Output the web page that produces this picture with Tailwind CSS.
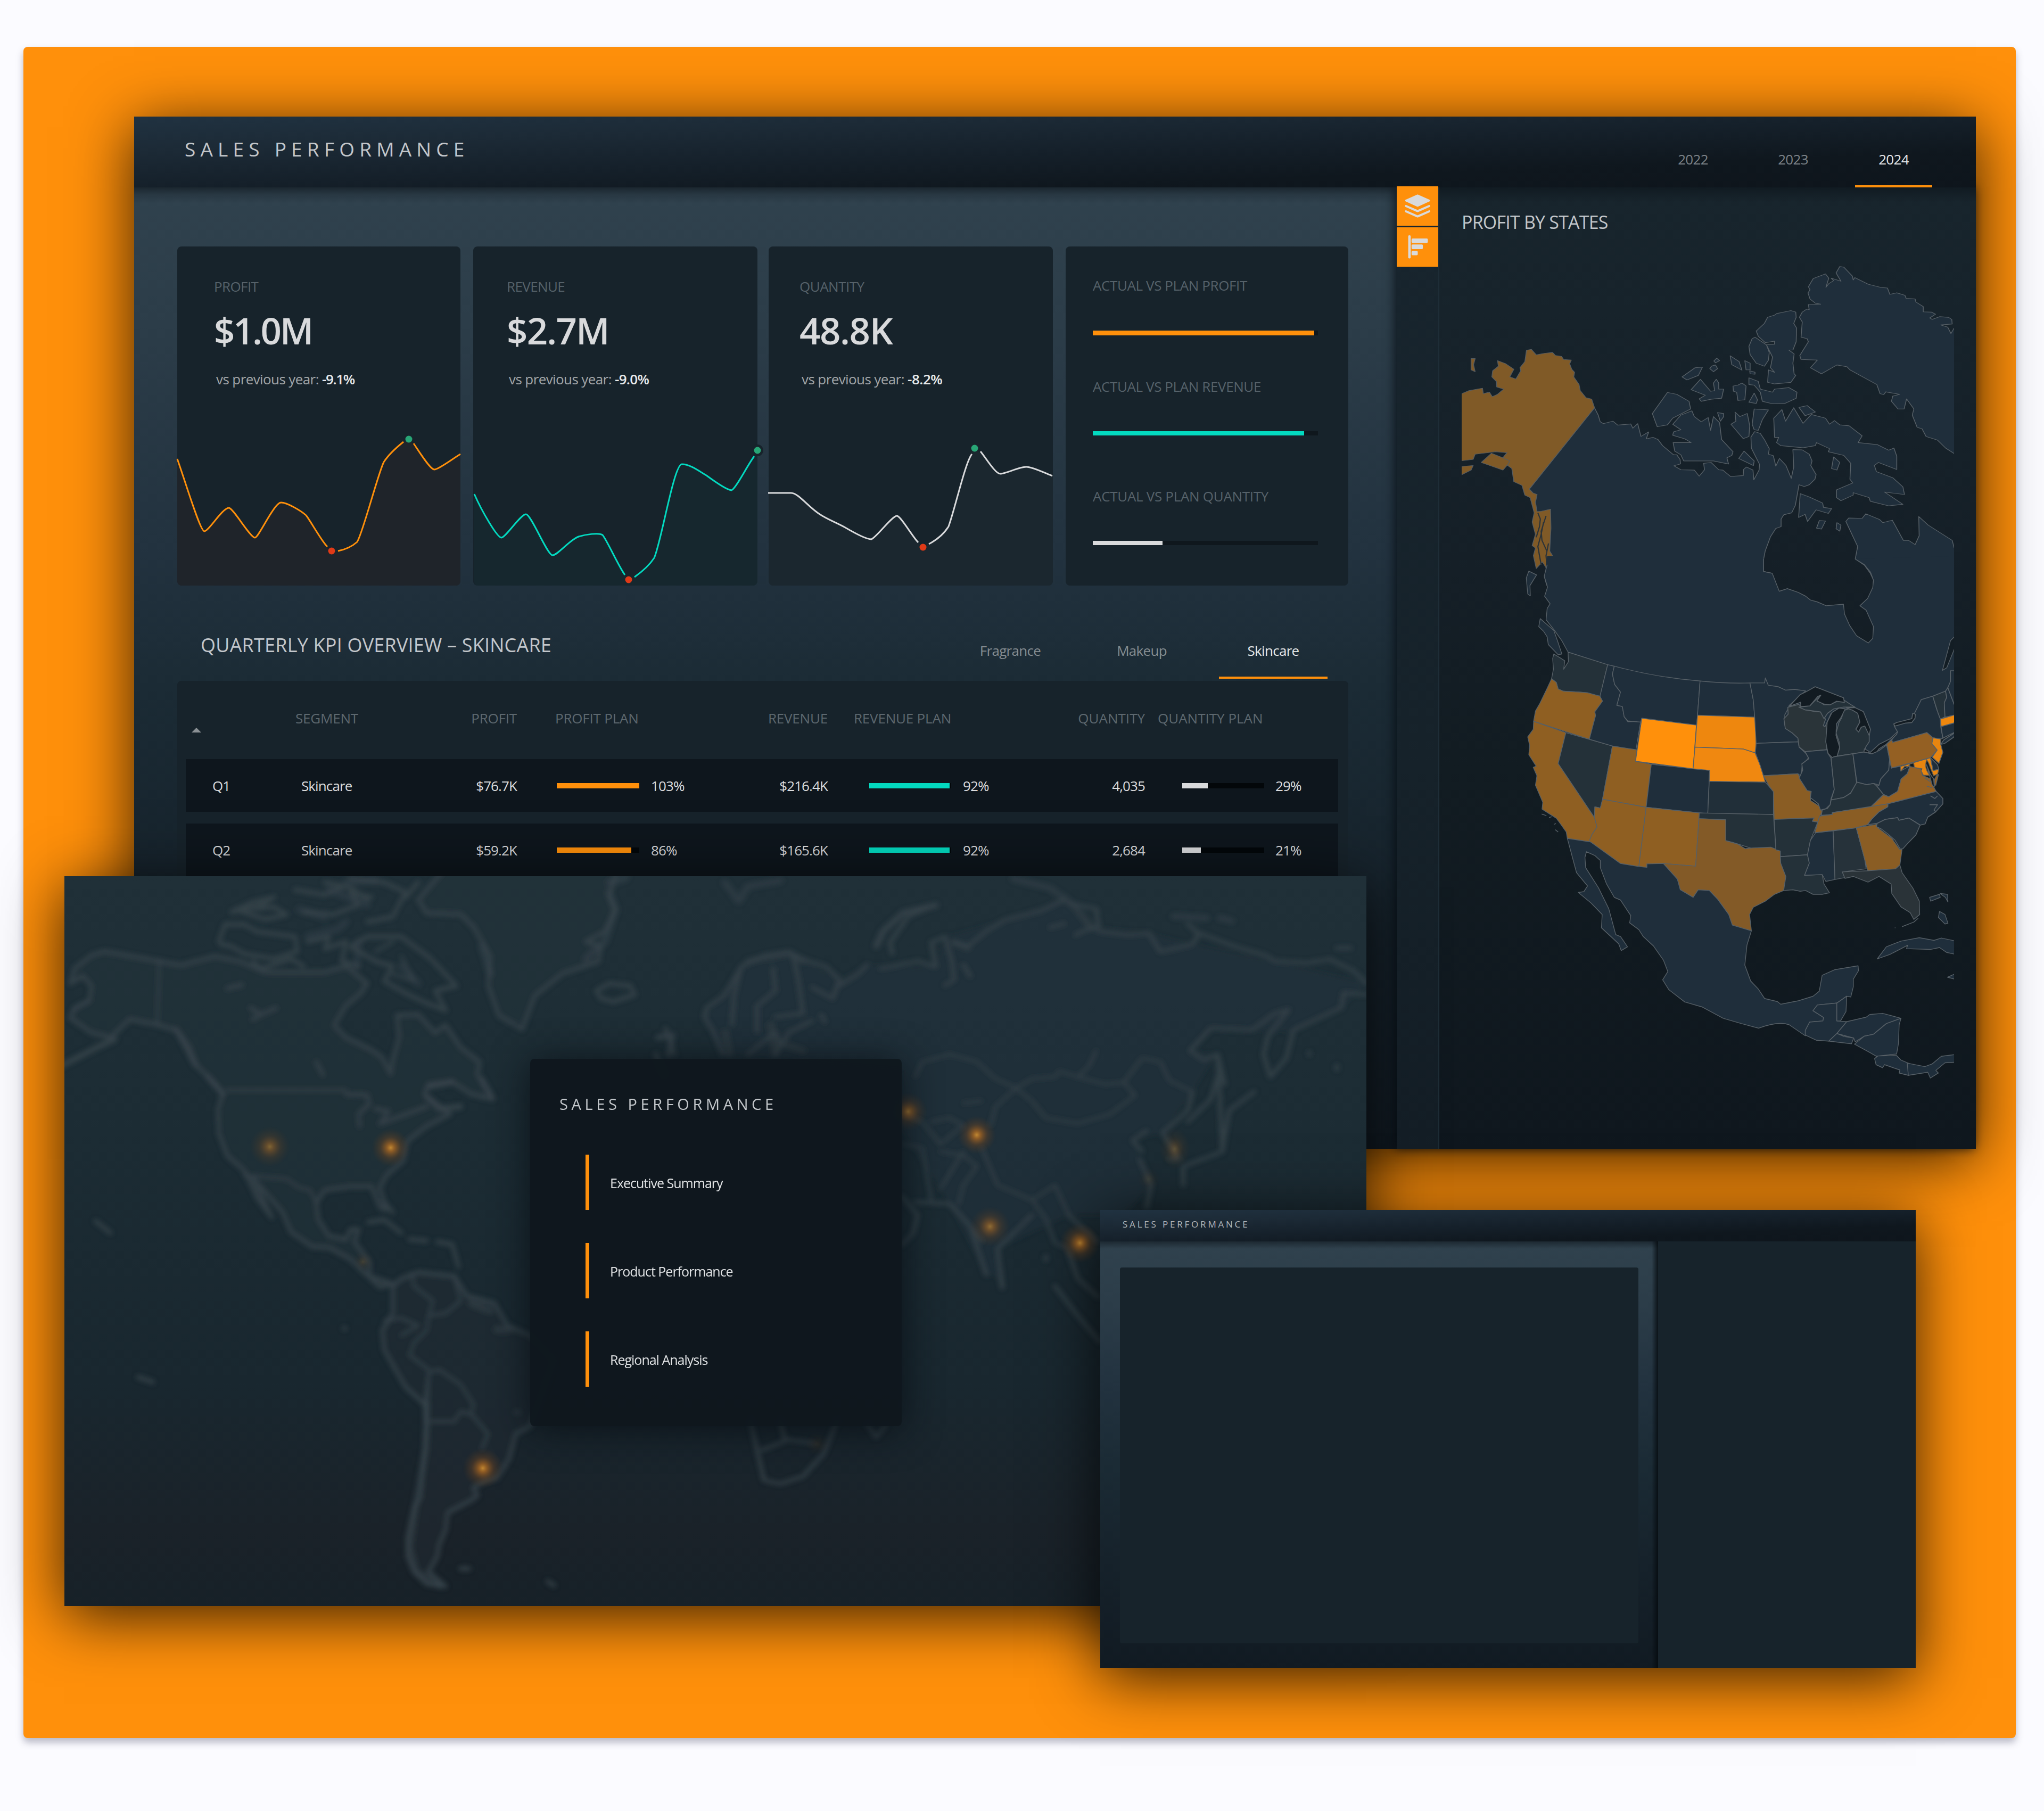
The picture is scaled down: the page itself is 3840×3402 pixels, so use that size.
<!DOCTYPE html>
<html lang="en">

<head>
    <meta charset="UTF-8">
    <meta name="viewport" content="width=device-width, initial-scale=1.0">
    <title>Sales Performance</title>
    <script src="https://cdn.jsdelivr.net/npm/@tailwindcss/browser@4"></script>
</head>

<body class="w-[3840px] h-[3402px] overflow-hidden bg-[#fbfbff] pt-[88px] pl-[44px] font-['Open_Sans','Noto_Sans',sans-serif] text-[26px] leading-none text-[#dcdddf]">

    <div class="relative w-[3743px] h-[3177px] rounded-lg bg-[#ff900b] shadow-[0_8px_14px_rgba(60,60,90,0.35)]">

        <!-- main dashboard -->
        <div class="absolute left-[208px] top-[131px] w-[3460px] h-[1939px] flex flex-col bg-[#17232b] shadow-[0_20px_110px_rgba(0,0,0,0.78)]">
            <header class="relative z-10 h-[133px] shrink-0 flex justify-between bg-[linear-gradient(177.8deg,#203241_0%,#1c2a36_25%,#15202a_50%,#0f171e_75%,#0e151c_100%)]">
                <h1 class="pl-[95px] pt-[41px] text-[37px] leading-[40px] tracking-[9.2px] text-[#c3c7cb]">SALES PERFORMANCE</h1>
                <nav class="flex gap-[43px] pr-[82px] text-[#7d8388] tracking-[-0.7px]">
                    <a class="w-[145px] h-[133px] pt-[67px] pr-[2px] text-center">2022</a>
                    <a class="w-[145px] h-[133px] pt-[67px] pr-[2px] text-center">2023</a>
                    <a class="w-[145px] h-[133px] pt-[67px] text-center text-[#e6e8ea] border-b-4 border-[#ff900b]">2024</a>
                </nav>
            </header>

            <div class="flex flex-1 min-h-0">
                <main class="w-[2372px] pl-[81px] pt-[111px] bg-[linear-gradient(180deg,rgba(10,16,22,0.55)_0,rgba(10,16,22,0.2)_14px,rgba(10,16,22,0)_30px),linear-gradient(180deg,#30424e_0%,#2c3d49_14%,#22323f_38%,#1b2b35_52%,#16222b_75%,#111a22_100%)]">
                    <div class="flex">
                        <section class="relative w-[532px] h-[637px] mr-[24px] rounded-lg bg-[#17232b]">
                            <svg class="absolute inset-0 w-full h-full overflow-visible" viewBox="333 463 532 637" fill="none">
                                <path fill="#ff5c20" fill-opacity=".035" d="M333 862C350 910 376 998 384 998C392 998 418 954 430 954C438 954 470 1010 479 1010C486 1010 515 944 528 944C540 944 566 960 575 968C585 978 608 1022 623 1035C650 1032 662 1026 671 1018C682 1000 710 890 721 868C730 854 748 834 768 825C786 846 808 882 816 882C824 882 850 862 865 853V1092Q865 1100 857 1100H341Q333 1100 333 1092Z" />
                                <path stroke="#ff900b" stroke-width="3" d="M333 862C350 910 376 998 384 998C392 998 418 954 430 954C438 954 470 1010 479 1010C486 1010 515 944 528 944C540 944 566 960 575 968C583 978 605 1018 615 1027M635 1035C650 1032 662 1026 671 1018C682 1000 710 890 721 868C730 854 748 838 758 830M777 833C786 846 808 882 816 882C824 882 850 862 865 853" />
                                <circle cx="623" cy="1035" r="6.5" fill="#e03a17" />
                                <circle cx="768" cy="825" r="6.5" fill="#28a676" />
                            </svg>
                            <div class="relative pl-[69px] pt-[62px]">
                                <h2 class="leading-[26px] tracking-[-0.6px] text-[#56626a]">PROFIT</h2>
                                <p class="mt-[32px] text-[69px] leading-[74px] font-semibold tracking-[-3.4px] text-[#d9dadc]">$1.0M</p>
                                <p class="mt-[39px] pl-1 leading-[32px] tracking-[-0.6px] text-[#a2a6a9]">vs previous year: <span class="font-semibold tracking-[-1.4px] text-[#e8eaeb]">-9.1%</span></p>
                            </div>
                        </section>
                        <section class="relative w-[534px] h-[637px] mr-[21px] rounded-lg bg-[#17232b]">
                            <svg class="absolute inset-0 w-full h-full overflow-visible" viewBox="889 463 534 637" fill="none">
                                <path fill="#03dac0" fill-opacity=".025" d="M891 928C905 960 934 1010 942 1010C950 1010 978 966 988 966C998 966 1028 1043 1038 1043C1048 1043 1070 1014 1087 1008C1100 1004 1128 1002 1132 1003C1140 1010 1166 1070 1181 1089C1200 1076 1218 1064 1229 1048C1242 1020 1264 884 1281 872C1296 872 1312 884 1327 893C1342 904 1364 920 1374 921C1384 921 1408 868 1423 846V1092Q1423 1100 1415 1100H897Q891 1100 891 1092Z" />
                                <path stroke="#03dac0" stroke-width="3" d="M891 928C905 960 934 1010 942 1010C950 1010 978 966 988 966C998 966 1028 1043 1038 1043C1048 1043 1070 1014 1087 1008C1100 1004 1126 1000 1132 1005C1140 1014 1162 1064 1174 1080M1192 1084C1206 1074 1220 1062 1229 1048C1242 1020 1266 872 1281 872C1296 872 1312 884 1327 893C1342 904 1364 920 1374 921C1382 919 1404 874 1417 857" />
                                <circle cx="1181" cy="1089" r="6.5" fill="#e03a17" />
                                <circle cx="1423" cy="846" r="11" fill="#17232b" />
                                <circle cx="1423" cy="846" r="6.5" fill="#28a676" />
                            </svg>
                            <div class="relative pl-[63px] pt-[62px]">
                                <h2 class="leading-[26px] tracking-[-0.6px] text-[#56626a]">REVENUE</h2>
                                <p class="mt-[32px] text-[69px] leading-[74px] font-semibold tracking-[-1.8px] text-[#d9dadc]">$2.7M</p>
                                <p class="mt-[39px] pl-1 leading-[32px] tracking-[-0.6px] text-[#a2a6a9]">vs previous year: <span class="font-semibold tracking-[-0.7px] text-[#e8eaeb]">-9.0%</span></p>
                            </div>
                        </section>
                        <section class="relative w-[534px] h-[637px] mr-[24px] rounded-lg bg-[#17232b]">
                            <svg class="absolute inset-0 w-full h-full overflow-visible" viewBox="1444 463 534 637" fill="none">
                                <path fill="#ffffff" fill-opacity=".02" d="M1444 926H1486C1500 928 1518 952 1540 966C1555 976 1572 982 1588 991C1605 1001 1622 1012 1637 1013C1646 1010 1676 969 1685 969C1692 969 1720 1016 1733 1027C1750 1020 1774 1002 1782 989C1795 960 1816 852 1831 842C1845 850 1870 890 1879 890C1890 890 1912 877 1928 877C1940 877 1966 890 1978 894V1092Q1978 1100 1970 1100H1452Q1444 1100 1444 1092Z" />
                                <path stroke="#d9dadc" stroke-width="3" d="M1443 926H1486C1500 926 1518 952 1540 966C1555 976 1572 982 1588 991C1605 1001 1628 1013 1637 1013C1646 1010 1676 969 1685 969C1692 969 1714 1008 1725 1019M1745 1022C1760 1014 1774 1002 1782 989C1793 960 1814 866 1826 853M1842 848C1852 860 1870 890 1879 890C1890 890 1914 877 1928 877C1940 877 1966 890 1977 894" />
                                <circle cx="1734" cy="1028" r="6.5" fill="#e03a17" />
                                <circle cx="1831" cy="842" r="6.5" fill="#28a676" />
                            </svg>
                            <div class="relative pl-[58px] pt-[62px]">
                                <h2 class="leading-[26px] tracking-[-0.5px] text-[#56626a]">QUANTITY</h2>
                                <p class="mt-[32px] text-[69px] leading-[74px] font-semibold tracking-[-1.4px] text-[#d9dadc]">48.8K</p>
                                <p class="mt-[39px] pl-1 leading-[32px] tracking-[-0.6px] text-[#a2a6a9]">vs previous year: <span class="font-semibold tracking-[-0.5px] text-[#e8eaeb]">-8.2%</span></p>
                            </div>
                        </section>
                        <section class="w-[531px] h-[637px] pl-[51px] pt-[60px] rounded-lg bg-[#17232b]">
                            <h2 class="leading-[26px] tracking-[-0.4px] text-[#56626a]">ACTUAL VS PLAN PROFIT</h2>
                            <div class="mt-[72px] w-[423px] h-[9px] bg-[#0f171d]"><div class="h-full w-[416px] bg-[#ff900b]"></div></div>
                            <h2 class="mt-[83px] leading-[26px] tracking-[-0.4px] text-[#56626a]">ACTUAL VS PLAN REVENUE</h2>
                            <div class="mt-[71px] w-[423px] h-[8px] bg-[#0f171d]"><div class="h-full w-[397px] bg-[#03dac0]"></div></div>
                            <h2 class="mt-[101px] leading-[26px] tracking-[-0.3px] text-[#56626a]">ACTUAL VS PLAN QUANTITY</h2>
                            <div class="mt-[71px] w-[423px] h-[8px] bg-[#0f171d]"><div class="h-full w-[131px] bg-[#d9dadc]"></div></div>
                        </section>
                    </div>

                    <div class="flex justify-between w-[2201px] h-[179px] pt-[92px] pl-[44px] pr-[40px]">
                        <h2 class="text-[36px] leading-[40px] tracking-[0.2px] text-[#c3c7cb]">QUARTERLY KPI OVERVIEW – SKINCARE</h2>
                        <nav class="flex gap-[43px] h-[83px] tracking-[-0.7px] text-[#868d92]">
                            <a class="w-[204px] pt-[17px] text-center">Fragrance</a>
                            <a class="w-[204px] pt-[17px] text-center">Makeup</a>
                            <a class="w-[204px] pt-[17px] text-center text-[#e6e8ea] border-b-4 border-[#ff900b]">Skincare</a>
                        </nav>
                    </div>

                    <div class="w-[2200px] h-[560px] pl-[16px] pr-[19px] rounded-t-lg bg-[#17232b] tracking-[-0.9px]">
                        <div class="grid grid-cols-[206px_145px_271px_349px_235px_370px_226px_363px] h-[147px] pt-[57px] font-medium tracking-[-0.2px] text-[#5d686f]">
                            <span class="pl-[11px] pt-[31px]"><svg width="18" height="9" viewBox="0 0 18 9"><path fill="#8a9094" d="M9 0L18 9H0Z" /></svg></span>
                            <span>SEGMENT</span>
                            <span class="text-right">PROFIT</span>
                            <span class="pl-[72px]">PROFIT PLAN</span>
                            <span class="text-right">REVENUE</span>
                            <span class="pl-[49px]">REVENUE PLAN</span>
                            <span class="text-right tracking-[0px]">QUANTITY</span>
                            <span class="pl-[24px] tracking-[0px]">QUANTITY PLAN</span>
                        </div>
                        <div class="grid grid-cols-[206px_145px_271px_349px_235px_370px_226px_363px] items-center w-[2165px] h-[99px] pt-px bg-[#0e161d] text-[#dcdddf]">
                            <span class="pl-[50px]">Q1</span>
                            <span class="pl-[11px]">Skincare</span>
                            <span class="text-right">$76.7K</span>
                            <span class="pl-[75px] flex items-center gap-[22px]"><i class="w-[155px] h-[10px] bg-[#ff900b]"></i>103%</span>
                            <span class="text-right">$216.4K</span>
                            <span class="pl-[78px] flex items-center gap-[22px]"><i class="w-[154px] h-[10px] bg-[#03070a]"><i class="block h-full w-[151px] bg-[#03dac0]"></i></i>92%</span>
                            <span class="text-right">4,035</span>
                            <span class="pl-[70px] flex items-center gap-[21px]"><i class="w-[154px] h-[10px] bg-[#03070a]"><i class="block h-full w-[48px] bg-[#d9dadc]"></i></i>29%</span>
                        </div>
                        <div class="grid grid-cols-[206px_145px_271px_349px_235px_370px_226px_363px] items-center w-[2165px] h-[99px] mt-[22px] pt-px bg-[#0e161d] text-[#dcdddf]">
                            <span class="pl-[50px]">Q2</span>
                            <span class="pl-[11px]">Skincare</span>
                            <span class="text-right">$59.2K</span>
                            <span class="pl-[75px] flex items-center gap-[22px]"><i class="w-[155px] h-[10px] bg-[#03070a]"><i class="block h-full w-[140px] bg-[#ff900b]"></i></i>86%</span>
                            <span class="text-right">$165.6K</span>
                            <span class="pl-[78px] flex items-center gap-[22px]"><i class="w-[154px] h-[10px] bg-[#03070a]"><i class="block h-full w-[151px] bg-[#03dac0]"></i></i>92%</span>
                            <span class="text-right">2,684</span>
                            <span class="pl-[70px] flex items-center gap-[21px]"><i class="w-[154px] h-[10px] bg-[#03070a]"><i class="block h-full w-[35px] bg-[#d9dadc]"></i></i>21%</span>
                        </div>
                    </div>
                </main>

                <aside class="relative flex flex-1 shadow-[-3px_0_18px_rgba(4,10,16,0.8)]">
                    <div class="relative z-20 w-[78px] bg-[linear-gradient(180deg,#18252e,#16222a_60%,#131d25)]">
                        <button class="block -mt-[2px] w-[78px] h-[74px] bg-[#ff900b]">
                            <svg class="w-full h-full" viewBox="0 0 235 222" fill="#d9dadc" stroke="#d9dadc" stroke-linejoin="round" stroke-linecap="round">
                                <path stroke-width="10" d="M52 80L118 51L184 80L118 110Z" />
                                <path fill="none" stroke-width="12" d="M52 111L118 140L184 111M52 141L118 170L184 141" />
                            </svg>
                        </button>
                        <button class="block mt-[3px] w-[78px] h-[74px] bg-[#ff900b]">
                            <svg class="w-full h-full" viewBox="0 0 235 222" fill="#d9dadc">
                                <rect x="65" y="45" width="14" height="131" rx="6" />
                                <rect x="84" y="63" width="92" height="25" rx="6" />
                                <rect x="84" y="97" width="64" height="26" rx="6" />
                                <rect x="84" y="133" width="35" height="25" rx="6" />
                            </svg>
                        </button>
                    </div>
                    <div class="flex-1 pl-[42px] pt-[46px] border-l-2 border-[#1e2d37] bg-[linear-gradient(180deg,rgba(8,14,20,0.45)_0,rgba(8,14,20,0)_28px),linear-gradient(180deg,#18252d_0%,#151f27_40%,#121c22_60%,#0f171e_100%)]">
                        <h2 class="text-[34px] leading-[38px] tracking-[-0.8px] text-[#c3c7cb]">PROFIT BY STATES</h2>
                        <svg class="mt-[24px] w-[925px] h-[1620px]" viewBox="2746 460 925 1620" fill="#1f2e3b" stroke="#576067" stroke-width="2" stroke-linejoin="round">
                            <!-- arctic, alaska, northern canada -->
                            <g transform="translate(2580 200) scale(.7653 .574)">
                                <path d="M1145 524L1155 526 1176 555 1178 568 1182 560 1215 582 1245 592 1262 594 1268 615 1285 610 1305 618 1308 628 1330 630 1332 640 1350 655 1350 672 1370 673 1380 680 1366 692 1372 697 1390 688 1412 690 1420 697 1421 712 1393 715 1410 722 1418 743 1426 725 1450 720 1450 1145 1426 1136 1405 1118 1385 1092 1357 1080 1347 1055 1335 1050 1323 1010 1327 990 1309 957 1303 990 1288 990 1272 965 1275 948 1292 942 1258 934 1253 943 1244 940 1236 910 1170 862 1163 852 1138 846 1100 875 1073 855 1090 830 1050 828 1047 815 1068 770 1065 760 1050 755 1053 705 1046 690 1053 673 1064 663 1070 665 1068 648 1098 647 1085 644 1072 630 1067 610 1072 600 1068 590 1080 563 1110 548 1118 562 1111 592 1118 580 1130 570 1124 562 1148 572 1136 545Z" />
                                <path d="M1025 668L1037 673 1038 690 1032 710 1039 725 1038 770 1030 797 1020 797 1033 810 1030 840 1033 875 1037 880 1025 903 985 908 968 903 970 862 985 870 975 855 980 820 965 780 985 778 985 768 962 773 945 752 940 735 960 710 968 690 985 683 990 678Z" />
                                <path d="M937 755L965 780 972 805 970 830 960 850 940 840 925 812 922 785 930 760Z" />
                                <path d="M758 885L790 855 808 853 798 880 770 895ZM843 824L850 832 840 839 836 833ZM830 850L840 846 845 858 835 868 826 858ZM876 816L898 835 905 863 880 845ZM912 832L925 840 925 862 915 862ZM924 865L937 870 937 876 925 875Z" />
                                <path d="M803 893L828 932 838 930 835 905 842 893 848 905 848 925 860 925 855 955 830 958 805 965 800 957 815 945 780 927Z" />
                                <path d="M883 915L895 912 905 905 915 915 912 960 895 962 892 935 884 932Z" />
                                <path d="M922 888L945 900 950 925 980 935 985 925 1020 920 1040 935 1038 955 1010 972 980 973 955 965 950 935 935 912 922 910ZM935 938L943 960 940 972 922 968Z" />
                                <path d="M722 936L745 942 775 965 779 990 735 1020 722 1042 697 1048 685 1005Z" />
                                <path d="M735 1040L755 1010 782 996 788 1015 805 1032 822 1018 828 1060 835 1015 850 1035 855 1090 883 1130 880 1142 868 1150 872 1170 835 1160 762 1160 755 1140 740 1128 736 1100 780 1100 765 1088 735 1076 737 1065 755 1058Z" />
                                <path d="M845 1002L860 1005 860 1015 852 1030ZM888 1000L900 1015 918 1005 924 1045 922 1080 908 1087 878 1040 890 1030ZM935 990L970 993 955 1025 945 1060 935 1058 930 1040Z" />
                                <path d="M983 1020L1003 992 1012 1030 1032 986 1055 1037 1075 1008 1110 1020 1120 1040 1132 1028 1145 1042 1168 1045 1200 1078 1190 1100 1238 1107 1265 1125 1278 1118 1285 1145 1285 1188 1240 1165 1230 1175 1235 1195 1275 1215 1300 1245 1304 1270 1255 1262 1300 1302 1265 1307 1220 1292 1217 1280 1178 1264 1178 1272 1148 1290 1137 1280 1137 1255 1177 1232 1170 1220 1172 1168 1155 1142 1117 1130 1120 1120 1088 1100 1085 1110 1055 1117 1000 1110 990 1100 995 1083 985 1083Z" />
                                <path d="M1130 1147L1145 1165 1138 1190 1125 1185Z" />
                                <path d="M1045 985L1065 979 1085 1000 1060 1012ZM910 1128L935 1160 933 1175 897 1152ZM1095 1355L1110 1357 1100 1383 1088 1380ZM1138 1362L1148 1370 1145 1390 1136 1382Z" />
                                <path d="M1048 1267L1070 1278 1103 1298 1105 1312 1125 1316 1117 1332 1087 1320 1066 1358 1060 1335 1044 1345Z" />
                                <path d="M426 1568L420 1540 428 1523 383 1252 543 986 552 1010 557 1032 565 1038 588 1030 600 1043 632 1039 637 1053 649 1038 657 1080 676 1065 670 1088 687 1083 699 1090 710 1110 737 1140 745 1140 753 1155 754 1170 738 1176 755 1189 788 1190 800 1210 813 1189 811 1168 829 1165 848 1189 858 1190 877 1211 908 1208 909 1188 916 1180 932 1190 934 1222 947 1190 948 1171 928 1118 927 1082 936 1064 950 1070 960 1090 972 1120 970 1138 982 1143 988 1177 997 1152 1013 1175 1026 1217 1032 1180 1030 1123 1053 1124 1070 1138 1077 1160 1074 1175 1087 1205 1084 1220 1070 1238 1058 1244 1045 1238 1036 1305 1027 1330 1008 1336 1001 1350 1001 1375 988 1381 975 1408 962 1455 958 1482 958 1522 978 1527 990 1568" />
                                <path d="M1227 1568L1228 1550 1220 1528 1206 1502 1183 1481 1189 1440 1160 1358 1167 1347 1200 1348 1209 1333 1243 1352 1251 1362 1274 1354 1301 1420 1314 1420 1330 1434 1340 1405 1339 1342 1362 1370 1421 1420 1426 1445 1450 1445 1450 1568" />
                                <path fill="#805a27" stroke="#565c60" d="M200 945L217 940 235 930 268 922 270 940 285 935 292 950 305 942 320 925 303 918 302 900 291 885 293 865 307 850 305 832 325 842 345 860 335 885 350 892 362 865 360 855 372 835 376 798 388 795 400 813 420 808 440 805 447 815 462 818 467 828 486 830 482 842 487 860 494 870 492 885 505 910 508 930 522 953 536 958 543 986 383 1252 392 1265 402 1270 398 1295 402 1326 412 1325 435 1318 436 1380 433 1455 447 1485 440 1508 428 1523 422 1505 415 1490 400 1512 393 1470 398 1445 390 1437 398 1400 390 1360 395 1330 385 1280 372 1272 365 1240 345 1228 340 1185 325 1170 318 1150 328 1133 300 1130 250 1138 245 1155 200 1162Z" />
                                <path fill="#805a27" stroke="#565c60" d="M265 1165L290 1135 318 1150 335 1160 330 1172 318 1190ZM200 1180L245 1175 240 1190 217 1205 200 1205ZM240 825L250 825 246 845 250 868 240 862Z" />
                                <path fill="none" stroke="#2c3338" stroke-width="3" d="M404 1330L410 1350 408 1375 400 1410M424 1340L412 1390 414 1420 426 1455M418 1360L412 1400 404 1440 408 1470 412 1500M430 1430L424 1470 426 1500" />
                            </g>
                            <!-- lower canada, states, mexico -->
                            <g transform="translate(2700 1050) scale(.6888 .7143)">
                                <path stroke="none" d="M890 -8L890 33 914 38 933 85 955 78 985 88 1005 98 1018 108 1037 113 1061 123 1108 119 1111 145 1125 175 1144 202 1176 221 1188 209 1190 178 1170 135 1153 123 1174 104 1188 75 1190 56 1182 35 1165 15 1140 0 1440 -8 1440 430 1300 440 1180 520 1000 420 700 370 480 330 357 245 340 215 320 188 297 160 300 130 308 118 293 98 301 74 292 45 296 20 300 -8Z" />
                                <path fill="none" d="M890 0V33L914 38 933 85 955 78 985 88 1005 98 1018 108 1037 113 1061 123 1108 119 1111 145 1125 175 1144 202 1176 221 1188 209 1190 178 1170 135 1153 123 1174 104 1188 75 1190 56 1182 35 1165 15 1140 0M357 245L340 215 320 188 297 160 300 130 308 118 293 98 301 74 292 45 300 15" />
                                <path fill="#131d24" d="M1430 185L1400 215 1378 293 1390 286 1430 190Z" />
                                <path d="M281 157L318 188 328 215 340 250 330 252 303 225 300 205 290 190 277 178ZM250 32L271 42 253 70 254 97 247 92 243 50Z" />
                                <path fill="#243139" d="M357 245L465 278 444 361 410 352 385 350 345 348 330 342 325 325 312 315 317 290 315 262 318 250 335 260 348 268 345 290 358 270Z" />
                                <path fill="#8f5f22" d="M312 315L325 325 330 342 345 348 385 350 410 352 444 361 451 374 430 402 432 412 415 474 263 427 268 400 280 380 300 340Z" />
                                <path fill="#8f5f22" d="M263 427L351 457 330 538 429 680 436 705 422 725 418 744 355 735 352 718 335 695 325 682 286 658 288 640 268 595 272 570 262 548 270 545 250 515 252 490 247 468 262 448Z" />
                                <path fill="#243139" d="M351 457L478 492 451 632 445 655 430 652 429 680 330 538Z" />
                                <path d="M465 278L483 282 478 303 484 330 500 350 490 385 505 388 510 415 520 428 555 427 542 503 478 492 415 474 432 412 430 402 451 374 444 361Z" />
                                <path d="M483 282Q600 312 717 321L710 411 708 437 558 419 555 429 520 426 510 415 505 388 490 385 500 350 484 330 478 303Z" />
                                <path fill="#8f5f22" d="M478 492L544 502 541 532 584 540 570 653 451 632Z" />
                                <path d="M584 540L743 556 738 670 570 653Z" />
                                <path fill="#8f5f22" d="M451 632L570 653 550 809 500 801 412 748 422 725 436 705 429 680 430 652 445 655Z" />
                                <path fill="#8f5f22" d="M570 653L715 668 705 808 617 801 572 802 572 811 550 809Z" />
                                <path d="M717 321Q790 328 853 326L862 370 866 416 710 411Z" />
                                <path fill="#ff900b" d="M558 419L707 437 698 552 541 532Z" />
                                <path fill="#ee870e" d="M710 411L866 416 870 430 870 485 867 510 835 500 703 495Z" />
                                <path fill="#f08810" d="M703 495L835 500 867 510 880 540 895 587 742 585 743 556 698 552Z" />
                                <path fill="#212f39" d="M742 585L895 587 917 612 917 672 738 670Z" />
                                <path fill="#243139" d="M715 668L917 672 924 765 860 762 805 745 787 741 787 686 714 683Z" />
                                <path fill="#835a27" d="M714 683L787 686 787 741 820 750 840 762 860 760 910 758 936 768 937 800 951 835 945 872 920 882 895 900 862 916 852 935 857 978 805 963 795 935 765 895 742 872 712 870 698 890 663 870 655 842 617 801 705 808Z" />
                                <path d="M853 326L893 326 895 313 903 332 930 336 950 345 975 343 1005 347 960 385 958 392 948 410 948 437 985 465 985 481 870 485 866 416 862 370Z" />
                                <path d="M870 485L985 481 987 495 1015 520 995 545 993 572 984 565 890 570 880 540 868 510Z" />
                                <path fill="#8a5d24" d="M890 570L984 565 992 580 1020 612 1018 635 1042 650 1050 665 1042 680 1038 692 1023 690 1028 681 919 685 917 612 905 597Z" />
                                <path fill="#243139" d="M919 685L1028 681 1023 690 1038 692 1018 740 1010 778 936 783 936 768 924 765Z" />
                                <path fill="#243139" d="M936 783L1010 778 1015 800 1002 832 1050 830 1055 855 1070 878 1050 882 1025 882 1005 872 990 874 970 870 945 872 951 835 937 800Z" />
                                <path d="M1032 720L1080 715 1085 843 1060 848 1050 830 1002 832 1015 800 1010 778 1018 740Z" />
                                <path fill="#26323a" d="M1080 715L1143 707 1166 790 1170 815 1105 823 1112 838 1085 843Z" />
                                <path fill="#8a5d24" d="M1143 707L1198 698 1203 708 1240 735 1262 765 1268 763 1262 805 1250 815 1174 820 1166 790Z" />
                                <path fill="#2a3338" d="M1105 823L1174 820 1250 815 1262 805 1268 825 1297 865 1315 900 1316 935 1300 948 1290 930 1265 915 1240 880 1238 855 1205 835 1175 850 1135 835 1112 840Z" />
                                <path d="M355 735L418 744 500 801 550 809 572 811 572 802 617 801 655 842 663 870 698 890 712 870 742 872 765 895 795 935 805 963 857 978 845 1015 839 1068 855 1110 875 1130 893 1156 928 1164 937 1171 985 1162 1025 1150 1042 1137 1050 1095 1085 1080 1148 1070 1149 1083 1135 1105 1135 1125 1128 1152 1117 1150 1090 1168 1037 1173 1025 1188 1054 1206 1052 1215 1016 1218 1004 1240 1004 1254 960 1225Q930 1215 877 1234L830 1222 780 1208 722 1178 675 1165 632 1133 615 1107 629 1085 617 1055 590 1018 562 993 550 975 525 957 528 938 500 897 483 890 462 855 445 812 445 793 430 780 407 770 403 785 405 812 440 865 468 920 487 988 500 993 519 1020 502 1030 495 1012 448 970 450 935 420 905 385 877 400 875 410 860 380 825Z" />
                                <path d="M1090 1168V1215L1117 1217 1090 1248 1068 1268 1035 1266 1004 1252 1004 1240 1016 1218 1052 1215 1054 1206 1025 1188 1037 1173Z" />
                                <path d="M1090 1168L1117 1150 1115 1190 1100 1215 1090 1215Z" />
                                <path d="M1117 1217L1170 1205 1180 1198 1215 1195 1265 1208 1225 1222 1190 1250 1165 1255 1140 1270 1136 1260 1090 1248Z" />
                                <path d="M1068 1268L1090 1248 1110 1256 1136 1260 1130 1275Z" />
                                <path d="M1138 1276L1165 1255 1190 1250 1225 1222 1265 1208 1260 1225 1258 1275 1253 1302 1198 1308 1180 1298Z" />
                                <path d="M1193 1314L1202 1307 1253 1306 1265 1318 1290 1328 1285 1358 1260 1352 1262 1344 1220 1330 1215 1338 1197 1330Z" />
                                <path d="M1282 1326L1330 1335 1350 1328 1375 1308 1440 1300 1440 1322 1385 1325 1360 1345 1367 1352 1345 1365 1338 1350 1285 1358Z" />
                                <path d="M1200 1052L1225 1020 1265 1005 1315 996 1355 1003 1375 997 1440 1010 1440 1045 1390 1035 1370 1022 1345 1027 1280 1025 1283 1016 1235 1040Z" />
                                <path d="M1343 890L1370 882 1372 890 1346 900ZM1372 880L1392 882 1393 902 1386 890ZM1370 927L1385 935 1393 958 1385 960 1367 943ZM1392 1100L1420 1088 1420 1107Z" />
                                <path fill="none" d="M285 671L298 675M305 680L312 678M318 698L324 696M322 712L330 718M1248 970H1250M1268 967L1300 955 1312 945" />
                            </g>
                            <!-- east and great lakes -->
                            <g transform="translate(3330 1260) scale(.33333)" stroke-width="4.8">
                                <path fill="#2a3439" d="M86 206L148 190 182 220 240 230 270 232 292 255 298 275 286 310 296 315 330 240 310 320 302 380 306 445 183 456 150 430 143 380 110 350 72 325 64 270 88 245Z" />
                                <path fill="#243139" d="M148 205L210 198 270 138 262 170 290 192 325 190 395 160 440 190 465 205 400 205 345 215 310 240 290 270 270 232 182 220Z" />
                                <path fill="#121b22" d="M95 200L155 135 190 118 240 90 400 152 405 178 360 172 325 192 290 188 250 170 272 138 255 145 210 198 160 202 158 178Z" />
                                <path fill="#243139" d="M375 290L390 265 400 225 440 210 480 220 492 290 470 330 485 345 500 318 520 312 545 340 545 400 525 430 520 458 360 482 378 440 375 400 358 350Z" />
                                <path fill="#121b22" d="M308 290L335 235 375 210 410 215 385 265 360 300 358 365 378 430 365 480 340 493 312 465 300 400 305 330Z" />
                                <path fill="#121b22" d="M415 210L465 208 512 230 552 330 545 365 520 312 500 318 485 345 470 330 492 290 480 240 450 222Z" />
                                <path d="M183 456L308 445 312 465 330 493 348 670 330 720 325 755 300 778 270 785 258 750 213 715 218 680 195 675 150 605 170 560 165 525 205 495Z" />
                                <path fill="#233039" d="M330 493L345 485 453 468 475 640 440 690 400 715 330 728 348 670Z" />
                                <path d="M453 468L515 458 555 467 600 450 643 418 660 500 655 560 610 610 600 645 570 635 530 642 475 628Z" />
                                <path fill="#243139" d="M475 628L530 642 570 635 588 650 625 697 553 768 337 800 337 810 275 815 280 785 310 775 325 755 330 728 400 715 440 690Z" />
                                <path d="M660 500L670 548 722 538 722 565 775 535 760 580 725 610 705 680 655 710 625 697 588 650 600 645 610 610 655 560Z" />
                                <path fill="#946023" d="M553 768L625 700 655 710 705 680 725 610 760 580 775 540 800 545 835 555 845 590 890 610 905 650 922 680 650 750ZM925 590L935 585 920 645 912 645 912 615Z" />
                                <path fill="#e8850f" stroke="#6a6050" d="M720 540L890 490 905 562 937 557 930 582 908 592 895 560 880 520 868 500 862 535 868 560 885 590 850 588 838 565 842 552 800 545 795 520 775 525 765 540 745 538 725 565Z" />
                                <path d="M890 490L930 530 937 555 905 562Z" />
                                <path fill="#121b22" d="M868 530L890 585 908 610 912 655 900 645 885 590Z" />
                                <path d="M676 404L672 390 705 345 685 310 720 300 785 280 800 240 838 163 903 143 925 215 946 272 948 315 960 380 948 385 905 378 870 349Z" />
                                <path fill="#946023" d="M643 412L672 390 676 404 870 349 905 378 898 410 928 447 890 490 670 548Z" />
                                <path fill="#e8850f" d="M905 378L948 385 948 415 960 460 938 522 900 487 928 447 898 410Z" />
                                <path fill="#243139" d="M903 143L975 115 982 150 968 180 972 260 946 272 930 230Z" />
                                <path d="M975 115L988 95 1022 185 1050 245 972 262 968 180 982 150Z" />
                                <path d="M988 95L1003 60 1003 0 1050 0 1050 235 1022 185Z" />
                                <path fill="#ee870e" d="M946 272L1050 242 1050 287 950 315Z" />
                                <path d="M950 315L1050 287 1050 335 960 380ZM948 415L965 390 1050 335 1020 375 970 410Z" />
                                <path fill="#121b22" d="M690 312L683 300 700 292 785 270 790 240 805 245 803 268 785 292 750 295ZM545 465L600 415 660 385 703 345 700 358 640 415 600 440 590 455 560 468ZM518 440L545 455 540 463 515 458Z" />
                                <path d="M650 750L922 680 960 720 960 750 920 795 875 825 860 863 832 870 768 830 712 843 705 828 635 838 590 860 535 868 560 835 600 795 650 765Z" />
                                <path fill="none" d="M890 705L915 720 930 705M885 755L930 755 910 785 920 795M870 650L900 660M858 605L890 625" />
                                <path fill="#8a5d24" d="M337 800L650 750 648 768 600 795 560 835 535 868 470 885 238 913 265 820 337 810Z" />
                                <path fill="#222f39" d="M590 860L635 838 705 828 712 843 768 830 832 870 808 925 760 975 735 1003 720 1005 690 955 650 920 610 890 585 878Z" />
                            </g>
                        </svg>
                    </div>
                </aside>
            </div>
        </div>

        <!-- landing page -->
        <div class="absolute left-[77px] top-[1558px] w-[2446px] h-[1371px] bg-[linear-gradient(180deg,#203038_0%,#1c2c34_35%,#19272f_70%,#1a2229_90%,#172128_100%)] shadow-[0_20px_110px_rgba(0,0,0,0.78)]">
            <svg class="absolute inset-0 w-full h-full" viewBox="121 1646 2446 1371">
                <defs>
                    <filter id="soft" x="-5%" y="-5%" width="110%" height="110%"><feGaussianBlur stdDeviation="5" /></filter>
                    <radialGradient id="glow">
                        <stop offset="0" stop-color="#d39232" stop-opacity=".9" />
                        <stop offset=".2" stop-color="#b06a20" stop-opacity=".75" />
                        <stop offset=".55" stop-color="#7c4a1e" stop-opacity=".35" />
                        <stop offset="1" stop-color="#5a3a20" stop-opacity="0" />
                    </radialGradient>
                </defs>
                <g filter="url(#soft)" fill="none" stroke="#39464d" stroke-width="9" stroke-opacity=".75" stroke-linejoin="round" stroke-linecap="round">
                    <g transform="translate(100 1630) scale(.7972 .9247)">
                        <path fill="#26343b" fill-opacity=".45" d="M135 345L90 335 40 305 50 285 85 270 90 240 70 220 40 235 50 205 90 178 120 170 250 190 300 198 380 180 440 190 500 212 580 212 640 212 690 200 740 235 725 255 690 280 662 320 690 345 750 370 775 385 795 418 800 390 815 345 810 300 860 298 900 335 925 320 960 365 1005 395 1000 420 1035 470 985 460 940 435 885 440 875 460 935 500 880 525 835 555 825 595 785 625 770 650 785 695 770 690 750 648 700 648 640 655 620 680 625 715 650 748 690 755 700 735 720 735 710 760 745 800 745 830 800 845 770 852 730 820 700 795 650 772 610 770 560 740 540 700 470 630 515 710 480 670 450 615 410 585 390 540 388 490 400 458 370 430 330 395 290 330 240 318 180 308Z" />
                        <path stroke-width="12" d="M20 402L110 362 145 348M290 330L320 365 335 400M365 425L400 460M885 445L940 435M880 465L910 490 960 485M1010 430L1035 468" />
                        <path stroke-width="6" d="M250 190L245 318M410 452H690M450 625L550 632 580 650 605 655 620 680M820 180L850 230 800 215M800 150L760 170M45 290L85 270" />
                        <path d="M690 460L740 462 745 480 720 500 722 525M760 490L790 495 770 520 840 498 880 485M620 395L635 420M410 245L445 238M465 285L490 298 525 285M490 298L470 308" />
                        <path d="M420 90L480 80 520 60 470 70ZM430 85L500 105 550 95 520 80ZM570 45L640 55 680 40M590 90L660 95 720 75 700 50 750 60M640 30L700 40 740 65M390 150L405 115 450 115 480 130 570 140 575 170 520 185 450 175 420 160 395 155M470 190L490 205 560 185 590 200M600 150L650 140 640 165 690 150 680 190 720 200M700 160L740 140 820 140 890 185 950 240 900 250 925 290 880 275 830 255 780 230 800 200 760 190ZM740 110L800 100 830 50 780 30 700 22M860 30L830 60" />
                        <path stroke-width="16" stroke-opacity=".4" d="M650 45L740 75M580 85L640 100M600 140L670 125 690 110M690 30L760 25M820 200L860 235M720 150L715 200" />
                        <path fill="#26343b" fill-opacity=".45" d="M925 0L860 65 880 92 960 95 990 120 1030 180 1025 240 1050 300 1105 328 1135 260 1200 215 1285 190 1290 160 1255 150 1300 130 1325 85 1310 60 1330 0Z" />
                        <path stroke-width="16" d="M1010 160L1030 215M1255 185L1300 150 1325 85 1310 50M1350 20L1310 30" stroke-opacity=".5" />
                        <path d="M1280 250L1310 235 1360 240 1370 258 1320 272 1290 265Z" />
                        <path stroke-width="12" d="M1425 345L1460 340 1450 380M1420 380L1440 420" />
                        <path d="M742 720L780 715 820 742M840 755L880 758M905 760L940 765 955 810M100 718L135 742M780 680L800 700M200 1035L235 1045M685 936H688M1090 1106H1098M960 1424H980M1165 1450L1180 1458" />
                        <path fill="#222f37" fill-opacity=".45" d="M800 850L820 835 860 822 945 830 975 870 1040 885 1070 930 1124 950 1180 1000 1124 1135 1090 1150 1075 1200 1045 1240 1020 1245 990 1260 1000 1275 985 1285 930 1310 925 1345 910 1375 905 1400 885 1430 925 1460 880 1455 850 1430 835 1400 835 1360 850 1300 865 1280 880 1130 875 1090 830 1055 780 980 775 940 800 905Z" />
                        <path stroke-width="15" stroke-opacity=".5" d="M880 1090L878 1180 855 1290 840 1380 855 1430 910 1458M985 885L1030 900M1045 938H1075" />
                        <path stroke-width="6" d="M875 1090L885 1025 910 1020 960 1050 990 1090 985 1110 960 1105 945 1125 890 1125M985 1110L1025 1150 1010 1180M885 1020L840 990 850 965 880 940 885 910 925 905 960 880 945 830M885 910L895 880 850 850 845 825M780 920L820 915 860 930 820 950M885 1030L880 1130" />
                    </g>
                    <g transform="translate(1250 1630) scale(.861 .7015)">
                        <path stroke="none" fill="#26343b" fill-opacity=".5" d="M85 400L165 265 270 225 380 300 440 260 590 265 610 185 740 140 870 85 945 160 1055 175 1150 205 1330 250 1530 310 1475 375 1360 440 1280 435 1190 430 1145 490 1200 500 1150 600 1085 710 1020 730 1060 850 1000 930 880 930 725 1020 735 1100 700 1090 620 900 516 700 516 540 120 500Z" />
                        <path d="M0 430L20 500M125 500L105 440 85 400 90 375 130 340 165 265 215 235 270 225 300 245 350 265 380 300 365 350 320 320M145 420L150 340 165 265M280 240L290 300 300 390 240 400M235 270L240 330 200 370 200 440M180 500L240 440 250 470M240 500L270 440 320 410M340 395L348 412" />
                        <path stroke-width="16" stroke-opacity=".45" d="M180 250L270 230 300 250M130 440L140 500M230 420L240 500M250 470L300 490M130 40L160 90 180 50 250 35M460 210L475 170 520 120 590 100M1110 130L1180 135M1210 135L1235 142M760 30L840 55 880 90M630 200L660 215M890 100L930 160" />
                        <path d="M380 315L420 285 440 260M470 270L550 250 590 265 580 200 610 185 625 250 630 300 610 315M650 260L665 290M630 200L660 210 700 170 740 140 820 115 870 85M880 95L940 110 945 160 920 165 895 180M840 160L870 150M945 170L1010 180 1055 175 1080 225 1150 205 1165 175 1240 210 1310 235 1330 250 1400 255 1450 245 1500 275 1530 310M1465 215H1495M460 210L475 170 520 120 590 100 530 130 490 200 495 230M1140 150L1165 180" />
                        <path d="M1530 340L1480 335 1475 375 1370 435 1355 510 1320 560 1305 500 1315 450 1360 380 1330 390 1280 435 1190 430 1145 490 1175 515 1205 500 1220 580M1205 500L1210 620 1215 760M1205 560L1190 620 1140 680M1285 600L1230 650 1215 760 1130 800V850M1150 600L1140 650 1085 710 1120 780 1100 780M1050 705L1020 730 1040 760M1035 780L1060 850 1050 910M1405 495V500M1465 530V540" />
                        <path stroke-width="6" d="M545 560L560 520 620 500 680 520 720 565 765 590 800 565 850 560 860 545 900 560 925 530 940 490M900 560L960 580 1000 575 1025 610 970 660 900 685 830 670 800 625 765 590M1000 575L1040 510 1080 520 1100 570 1150 600M765 590L720 640 710 690M650 630L690 625M520 660L560 680 600 740 650 690 620 670 580 680M520 740L560 750 580 890M690 750L725 850 800 890 850 850 880 930M800 890L830 940 850 1005 880 1020M640 900L650 850 680 800 650 770 600 760M600 860L650 760" />
                        <path d="M516 880L550 930 540 980 516 1010M545 895L620 900 665 960 700 1090M735 1120L725 1020 800 930M665 960L690 1000M730 1095L735 1125M830 1040V1050M850 1120L900 1200 948 1270M880 1030L900 1100 945 1150M880 930L940 1000" />
                        <path d="M185 1480L200 1560 215 1640 250 1650 300 1630 345 1570 375 1480M440 1490L460 1525 480 1495M250 1480L260 1530 320 1540M210 1560L270 1530" />
                    </g>
                </g>
                <g fill="url(#glow)">
                    <circle cx="507" cy="2154" r="38" opacity=".6" />
                    <circle cx="734" cy="2156" r="36" />
                    <circle cx="907" cy="2758" r="38" />
                    <circle cx="682" cy="2370" r="20" opacity=".2" />
                    <circle cx="1706" cy="2088" r="36" opacity=".8" />
                    <circle cx="1835" cy="2132" r="36" />
                    <circle cx="1860" cy="2304" r="38" opacity=".7" />
                    <circle cx="2029" cy="2335" r="38" />
                    <ellipse cx="2207" cy="2158" rx="30" ry="40" opacity=".35" />
                    <circle cx="2158" cy="2215" r="24" opacity=".12" />
                    <circle cx="1535" cy="2712" r="24" opacity=".12" />
                </g>
            </svg>
            <div class="absolute left-[875px] top-[343px] w-[698px] h-[690px] pt-[68px] pl-[55px] rounded-lg bg-[#0f171d]/96 shadow-[0_6px_70px_rgba(8,14,20,0.85)]">
                <h2 class="text-[29px] leading-[34px] tracking-[6.6px] text-[#c3c7cb]">SALES PERFORMANCE</h2>
                <ul class="mt-[78px] pl-[49px] flex flex-col gap-[62px] text-[25px] tracking-[-1px] text-[#e2e4e6]">
                    <li class="flex items-center h-[104px] pl-[39px] pt-[3px] border-l-[7px] border-[#ff900b]">Executive Summary</li>
                    <li class="flex items-center h-[104px] pl-[39px] pt-[3px] border-l-[7px] border-[#ff900b]">Product Performance</li>
                    <li class="flex items-center h-[104px] pl-[39px] pt-[3px] border-l-[7px] border-[#ff900b]">Regional Analysis</li>
                </ul>
            </div>
        </div>

        <!-- blank page layout -->
        <div class="absolute left-[2023px] top-[2185px] w-[1532px] h-[860px] flex flex-col bg-[#17232b] shadow-[0_20px_110px_rgba(0,0,0,0.78)]">
            <header class="relative z-10 h-[59px] shrink-0 pl-[42px] pt-[17px] bg-[linear-gradient(177.8deg,#203241_0%,#1c2a36_25%,#15202a_50%,#0f171e_75%,#0e151c_100%)]">
                <h2 class="text-[17px] leading-[20px] tracking-[3.8px] text-[#b4b9bd]">SALES PERFORMANCE</h2>
            </header>
            <div class="flex flex-1">
                <div class="w-[1048px] pl-[37px] pt-[49px] bg-[linear-gradient(180deg,rgba(10,16,22,0.5)_0,rgba(10,16,22,0)_14px),linear-gradient(180deg,#30424e_0%,#2c3d49_14%,#22323f_34%,#1b2b35_52%,#16222b_75%,#111a22_100%)]">
                    <div class="w-[974px] h-[706px] rounded bg-[#17232b]"></div>
                </div>
                <div class="relative flex-1 bg-[#17232b]">
                    <div class="absolute right-full top-0 h-full w-[12px] bg-gradient-to-l from-[#04090d]/80 to-transparent"></div>
                </div>
            </div>
        </div>
    </div>

</body>

</html>
